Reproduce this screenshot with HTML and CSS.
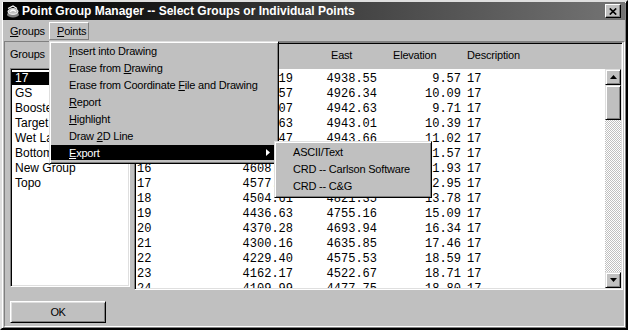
FILE: index.html
```html
<!DOCTYPE html>
<html lang="en">
<head>
    <meta charset="UTF-8">
    <meta name="viewport" content="width=device-width, initial-scale=1.0">
    <title>Point Group Manager</title>
    <link rel="stylesheet" href="styles.css">
</head>
<body>
    <div class="window">
        <div class="titlebar">
            <svg class="app-icon" width="15" height="15" viewBox="0 0 15 15">
                <ellipse cx="8" cy="10.5" rx="6" ry="3" fill="#808080"/>
                <ellipse cx="8" cy="7.5" rx="5" ry="2.8" fill="#c0c0c0" stroke="#fff" stroke-width="1"/>
                <path d="M3 4.5L8 2l4 2.5M5 7.5l3-1.5 3 1.5" stroke="#fff" stroke-width="1.2" fill="none"/>
            </svg>
            <span class="title">Point Group Manager -- Select Groups or Individual Points</span>
            <span class="close-btn">
                <svg width="8" height="7" viewBox="0 0 8 7"><path d="M0.8 0.5L7.2 6.5M7.2 0.5L0.8 6.5" stroke="#000" stroke-width="1.7"/></svg>
            </span>
        </div>

        <div class="menubar">
            <div class="menubar-item groups-menu"><span><u>G</u>roups</span></div>
            <div class="menubar-item open"><span><u>P</u>oints</span>
                <!-- open Points menu -->
                <div class="dropdown">
                    <div class="menu-item"><span><u>I</u>nsert into Drawing</span></div>
                    <div class="menu-item"><span>Erase from <u>D</u>rawing</span></div>
                    <div class="menu-item"><span>Erase from Coordinate <u>F</u>ile and Drawing</span></div>
                    <div class="menu-item"><span><u>R</u>eport</span></div>
                    <div class="menu-item"><span><u>H</u>ighlight</span></div>
                    <div class="menu-item"><span>Draw <u>2</u>D Line</span></div>
                    <div class="menu-item active"><span><u>E</u>xport</span>
                        <svg class="arrow" width="4" height="7" viewBox="0 0 4 7"><polygon points="0,0 4,3.5 0,7" fill="#fff"/></svg>
                        <div class="dropdown submenu">
                            <div class="menu-item"><span>ASCII/Text</span></div>
                            <div class="menu-item"><span>CRD -- Carlson Software</span></div>
                            <div class="menu-item"><span>CRD -- C&amp;G</span></div>
                        </div>
                    </div>
                </div>
            </div>
        </div>

        <div class="client">
            <div class="top-row">
                <div class="groups-col">
                    <div class="groups-label">Groups</div>
                    <div class="listbox">
                        <div class="lb-item selected">17</div>
                        <div class="lb-item">GS</div>
                        <div class="lb-item">Booster</div>
                        <div class="lb-item">Target</div>
                        <div class="lb-item">Wet Lands</div>
                        <div class="lb-item">Bottom</div>
                        <div class="lb-item">New Group</div>
                        <div class="lb-item">Topo</div>
                    </div>
                </div>

                <div class="listview">
                    <div class="lv-header">
                        <span class="h-point">Point</span>
                        <span class="h-north">North</span>
                        <span class="h-east">East</span>
                        <span class="h-elev">Elevation</span>
                        <span class="h-desc">Description</span>
                    </div>
                    <div class="lv-body">
                        <div class="lv-rows" id="pointRows">
                            <!-- rows are filled in below -->
                        </div>
                        <div class="scrollbar">
                            <div class="sb-btn">
                                <svg width="7" height="4" viewBox="0 0 7 4"><polygon points="3.5,0 7,4 0,4" fill="#000"/></svg>
                            </div>
                            <div class="sb-thumb"></div>
                            <div class="sb-track"></div>
                            <div class="sb-btn">
                                <svg width="7" height="4" viewBox="0 0 7 4"><polygon points="0,0 7,0 3.5,4" fill="#000"/></svg>
                            </div>
                        </div>
                    </div>
                </div>
            </div>

            <div class="bottom-row">
                <button class="ok-button">OK</button>
            </div>
        </div>
    </div>

    <script>
        // point number, northing, easting, elevation, description
        const points = [
            [10, '4832.19', '4938.55', '9.57', '17'],
            [11, '4795.57', '4926.34', '10.09', '17'],
            [12, '4761.07', '4942.63', '9.71', '17'],
            [13, '4722.63', '4943.01', '10.39', '17'],
            [14, '4683.47', '4943.66', '11.02', '17'],
            [15, '4645.12', '4930.18', '11.57', '17'],
            [16, '4608.34', '4901.72', '11.93', '17'],
            [17, '4577.05', '4866.40', '12.95', '17'],
            [18, '4504.61', '4821.35', '13.78', '17'],
            [19, '4436.63', '4755.16', '15.09', '17'],
            [20, '4370.28', '4693.94', '16.34', '17'],
            [21, '4300.16', '4635.85', '17.46', '17'],
            [22, '4229.40', '4575.53', '18.59', '17'],
            [23, '4162.17', '4522.67', '18.71', '17'],
            [24, '4109.99', '4477.75', '18.80', '17']
        ];

        const rowsEl = document.getElementById('pointRows');
        points.forEach(p => {
            rowsEl.innerHTML += `
                <div class="lv-row">
                    <span>${p[0]}</span>
                    <span class="num">${p[1]}</span>
                    <span class="num">${p[2]}</span>
                    <span class="num">${p[3]}</span>
                    <span class="desc">${p[4]}</span>
                </div>`;
        });
    </script>
</body>
</html>
```

FILE: styles.css
```css
* {
    box-sizing: border-box;
}
body {
    margin: 0;
    background: #c0c0c0;
    font-family: "Liberation Sans", Arial, sans-serif;
    font-size: 11px;
    letter-spacing: -0.2px;
    color: #000;
}
.window {
    position: relative;
    width: 628px;
    height: 330px;
    display: flex;
    flex-direction: column;
    background: #c0c0c0;
    border: 2px solid;
    border-color: #dfdfdf #000 #000 #dfdfdf;
    box-shadow: inset 1px 1px #fff, inset -1px -1px #808080;
    padding: 0 1px 1px 1px;
}

/* title bar */
.titlebar {
    height: 18px;
    display: flex;
    align-items: center;
    padding: 0 4px 0 2px;
    background: linear-gradient(to right, #000 0%, #1a1a1a 25%, #3c3c3c 50%, #747474 100%);
    color: #fff;
}
.app-icon {
    margin-right: 2px;
    flex: none;
}
.title {
    font-size: 12px;
    font-weight: bold;
    letter-spacing: 0;
    white-space: nowrap;
}
.close-btn {
    margin-left: auto;
    width: 16px;
    height: 14px;
    display: flex;
    align-items: center;
    justify-content: center;
    background: #c0c0c0;
    border: 1px solid;
    border-color: #fff #000 #000 #fff;
    box-shadow: inset -1px -1px #808080;
}

/* menu bar */
.menubar {
    height: 20px;
    margin-top: 1px;
    display: flex;
    padding-left: 7px;
}
.menubar-item {
    position: relative;
    display: flex;
    align-items: center;
    white-space: nowrap;
}
.groups-menu {
    width: 39px;
}
.menubar-item.open {
    width: 40px;
    height: 18px;
    margin-top: 1px;
    padding-left: 7px;
    border: 1px solid;
    border-color: #fff #808080 #808080 #fff;
}
.dropdown {
    position: absolute;
    top: 18px;
    left: -1px;
    width: 230px;
    padding: 1px;
    background: #c0c0c0;
    border: 1px solid;
    border-color: #dfdfdf #000 #000 #dfdfdf;
    box-shadow: inset 1px 1px #fff, inset -1px -1px #808080;
    z-index: 10;
}
.menu-item {
    position: relative;
    height: 17px;
    padding: 0 0 2px 18px;
    margin-right: 3px;
    display: flex;
    align-items: center;
    white-space: nowrap;
}
.menu-item.active {
    color: #fff;
    background: linear-gradient(#000, #000) 0 0 / 100% 15px no-repeat;
}
.menu-item .arrow {
    margin-left: auto;
    margin-right: 4px;
}
.submenu {
    top: -4px;
    left: 223px;
    width: 158px;
    padding: 2px 1px 2px 1px;
    color: #000;
}
.submenu .menu-item {
    padding-left: 17px;
}

/* client area */
.client {
    flex: 1;
    margin-left: 1px;
    display: flex;
    flex-direction: column;
    border: 1px solid;
    border-color: #808080 #fff #fff #808080;
}
.top-row {
    height: 248px;
    display: flex;
    gap: 4px;
}
.groups-col {
    width: 125px;
    padding-left: 5px;
}
.groups-label {
    height: 26px;
    line-height: 25px;
}
.listbox {
    height: 219px;
    padding: 2px 1px 0 1px;
    overflow: hidden;
    background: #fff;
    border: 1px solid;
    border-color: #808080 #fff #fff #808080;
    box-shadow: inset 1px 1px #000, inset -1px -1px #dfdfdf;
    font-size: 12px;
    letter-spacing: 0;
}
.lb-item {
    height: 15px;
    line-height: 15px;
    padding-left: 3px;
    white-space: nowrap;
}
.lb-item.selected {
    color: #fff;
    background: linear-gradient(#000, #000) 0 1px / 100% 13px no-repeat;
}

/* points list */
.listview {
    width: 489px;
    height: 248px;
    display: flex;
    flex-direction: column;
    padding: 1px;
    border: 1px solid;
    border-color: #808080 #fff #fff #808080;
    box-shadow: inset 1px 1px #000, inset -1px -1px #dfdfdf;
}
.lv-header,
.lv-row {
    display: grid;
    grid-template-columns: 63px 93px 84px 84px 1fr;
}
.lv-header {
    height: 25px;
    padding: 0 0 4px 1px;
    align-items: center;
}
.h-point {
    padding-left: 3px;
}
.h-north {
    padding-left: 50px;
}
.h-east {
    padding-left: 38px;
}
.h-elev {
    padding-left: 16px;
}
.h-desc {
    padding-left: 6px;
}
.lv-body {
    flex: 1;
    display: flex;
    background: #fff;
    overflow: hidden;
}
.lv-rows {
    flex: 1;
    padding: 3px 0 0 1px;
    overflow: hidden;
    font-family: "Liberation Mono", "Courier New", monospace;
    font-size: 12px;
    letter-spacing: 0;
}
.lv-row {
    height: 15px;
    line-height: 15px;
    white-space: nowrap;
}
.lv-row .num {
    text-align: right;
}
.lv-row .desc {
    padding-left: 6px;
}

/* scroll bar */
.scrollbar {
    width: 16px;
    display: flex;
    flex-direction: column;
}
.sb-btn,
.sb-thumb {
    background: #c0c0c0;
    border: 1px solid;
    border-color: #dfdfdf #000 #000 #dfdfdf;
    box-shadow: inset 1px 1px #fff, inset -1px -1px #808080;
}
.sb-btn {
    height: 16px;
    display: flex;
    align-items: center;
    justify-content: center;
}
.sb-thumb {
    height: 35px;
}
.sb-track {
    flex: 1;
    background: repeating-conic-gradient(#c0c0c0 0 25%, #fff 0 50%) 0 0 / 2px 2px;
}

/* bottom */
.bottom-row {
    flex: 1;
    padding: 11px 0 0 5px;
}
.ok-button {
    width: 96px;
    height: 22px;
    padding: 0;
    background: #c0c0c0;
    border: 1px solid;
    border-color: #fff #000 #000 #fff;
    box-shadow: inset 1px 1px #dfdfdf, inset -1px -1px #808080;
    font-family: "Liberation Sans", Arial, sans-serif;
    font-size: 11px;
    letter-spacing: -0.4px;
    color: #000;
}
```
